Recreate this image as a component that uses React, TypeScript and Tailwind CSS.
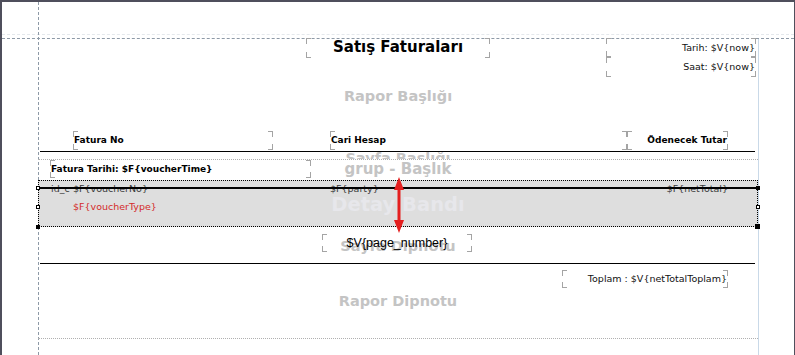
import React from 'react';

const sans = "font-['DejaVu_Sans',sans-serif]";
const arial = "font-['Liberation_Sans',Arial,sans-serif]";

// text element frame with the grey corner marks of the designer
function Box({ className, children }: { className: string; children?: React.ReactNode }) {
  return (
    <div className={`relative shrink-0 ${className}`}>
      <div className="absolute left-0 top-0 h-[6px] w-[5px] border-l border-t border-[#a4a4a4]" />
      <div className="absolute bottom-0 left-0 h-[6px] w-[5px] border-b border-l border-[#a4a4a4]" />
      <div className="absolute right-0 top-0 h-[6px] w-[5px] border-r border-t border-[#a4a4a4]" />
      <div className="absolute bottom-0 right-0 h-[6px] w-[5px] border-b border-r border-[#a4a4a4]" />
      {children}
    </div>
  );
}

function BandLabel({ text, className }: { text: string; className: string }) {
  return (
    <div className={`pointer-events-none absolute left-0 w-full text-center font-bold leading-none ${sans} ${className}`}>
      {text}
    </div>
  );
}

const small = `text-[9.5px] text-[#111] ${sans}`;
const bold = `text-[9px] font-bold text-black ${sans}`;

export default function App() {
  return (
    <div className="relative h-[355px] w-[795px] overflow-hidden border-l-2 border-r border-t-2 border-[#4f4f5c] bg-white pl-[36px] pt-[36px]">
      {/* guides */}
      <div className="absolute left-0 top-[32px] w-full border-t border-dashed border-[#e4e8ec]" />
      <div className="absolute left-0 top-[36px] w-full border-t border-dashed border-[#8d99a6]" />
      <div className="absolute left-[36px] top-0 h-full border-l border-dashed border-[#8d99a6]" />

      <div className="flex h-full w-[721px] flex-col border-r border-[#c9d9e8]">
        {/* title band */}
        <div className="relative flex h-[84px] shrink-0 items-start">
          <BandLabel text="Rapor Başlığı" className="top-[51px] text-[14.5px] text-[#c4c4c4]" />
          <Box className="ml-[268px] h-[20px] w-[184px]">
            <div className={`text-center text-[15px] font-bold leading-[19px] text-black ${sans}`}>Satış Faturaları</div>
          </Box>
          <div className="ml-[116px] flex flex-col">
            <Box className="h-[19px] w-[150px]">
              <div className={`pr-[1px] text-right leading-[19px] ${small}`}>Tarih: $V{'{now}'}</div>
            </Box>
            <Box className="h-[20px] w-[150px]">
              <div className={`pr-[1px] text-right leading-[20px] ${small}`}>Saat: $V{'{now}'}</div>
            </Box>
          </div>
        </div>

        {/* page header */}
        <div className="relative flex h-[38px] shrink-0 flex-col overflow-hidden border-b border-dotted border-[#b0b0b0] pt-[9px]">
          <BandLabel text="Sayfa Başlığı" className="top-[29px] text-[14.5px] text-[#c4c4c4]" />
          <div className="relative flex pl-[35px]">
            <Box className="h-[19px] w-[200px]">
              <div className={`pl-[1px] leading-[19px] ${bold}`}>Fatura No</div>
            </Box>
            <Box className="ml-[57px] h-[19px] w-[297px]">
              <div className={`pl-[1px] leading-[19px] ${bold}`}>Cari Hesap</div>
            </Box>
            <Box className="h-[19px] w-[101px]">
              <div className={`pr-[1px] text-right leading-[19px] ${bold}`}>Ödenecek Tutar</div>
            </Box>
          </div>
          <div className="relative ml-[2px] mt-[1px] w-[715px] border-t border-black" />
        </div>

        {/* group header */}
        <div className="relative flex h-[20px] shrink-0 overflow-hidden pl-[12px]">
          <BandLabel text="grup - Başlık" className="top-[2px] text-[15px] text-[#c4c4c4]" />
          <Box className="h-[18px] w-[261px]">
            <div className={`pl-[1px] leading-[18px] ${bold}`}>Fatura Tarihi: $F{'{voucherTime}'}</div>
          </Box>
        </div>

        {/* detail band */}
        <div className="relative flex h-[47px] shrink-0 flex-col border border-dotted border-black bg-[#dedede] pl-[12px] pr-[29px]">
          <BandLabel text="Detay Bandı" className="top-[14px] text-[19.5px] text-[#e7e7eb]" />
          <div className={`relative flex h-[16px] items-center leading-[16px] ${sans} text-[9.5px] text-[#3a3a3a]`}>
            <span className="w-[22px]">id_c</span>
            <span className="w-[257px]">$F{'{voucherNo}'}</span>
            <span>$F{'{party}'}</span>
            <span className="ml-auto">$F{'{netTotal}'}</span>
          </div>
          <div className={`relative mt-[2px] pl-[22px] text-[9.5px] leading-[16px] text-[#d42a2a] ${sans}`}>$F{'{voucherType}'}</div>
          {/* selected line element with its handles */}
          <div className="absolute left-[1px] top-[6px] w-[717px] border-t-2 border-black" />
          <div className="absolute left-[-3px] top-[5px] h-[4px] w-[4px] border border-black bg-white" />
          <div className="absolute left-[-3px] top-[24px] h-[4px] w-[4px] border border-black bg-white" />
          <div className="absolute bottom-[-3px] left-[-3px] h-[4px] w-[4px] bg-black" />
          <div className="absolute right-[-3px] top-[5px] h-[4px] w-[4px] bg-black" />
          <div className="absolute right-[-3px] top-[24px] h-[4px] w-[4px] border border-black bg-white" />
          <div className="absolute bottom-[-3px] right-[-3px] h-[5px] w-[5px] bg-black" />
        </div>

        {/* page footer */}
        <div className="relative flex h-[37px] shrink-0 flex-col pt-[7px]">
          <BandLabel text="Sayfa Dipnotu" className="top-[12px] text-[14.5px] text-[#c4c4c4]" />
          <Box className="ml-[284px] h-[18px] w-[150px]">
            <div className={`text-center text-[12.5px] leading-[18px] text-black ${arial}`}>$V{'{page_number}'}</div>
          </Box>
          <div className="relative ml-[2px] mt-auto w-[715px] border-t border-black" />
        </div>

        {/* summary */}
        <div className="relative flex h-[75px] shrink-0 flex-col border-b border-dotted border-[#b0b0b0] pt-[6px]">
          <BandLabel text="Rapor Dipnotu" className="top-[30px] text-[14.5px] text-[#c4c4c4]" />
          <Box className="ml-[524px] h-[18px] w-[166px]">
            <div className={`pr-[1px] text-right leading-[18px] ${small}`}>Toplam : $V{'{netTotalToplam}'}</div>
          </Box>
        </div>
      </div>

      {/* resize arrow over the detail band */}
      <svg className="absolute left-[390px] top-[175px]" width="14" height="56" viewBox="0 0 14 56">
        <line x1="7" y1="8" x2="7" y2="48" stroke="#e41e1e" strokeWidth="3" />
        <polygon points="7,0 2,13 12,13" fill="#e41e1e" />
        <polygon points="7,56 2,43 12,43" fill="#e41e1e" />
      </svg>
    </div>
  );
}
